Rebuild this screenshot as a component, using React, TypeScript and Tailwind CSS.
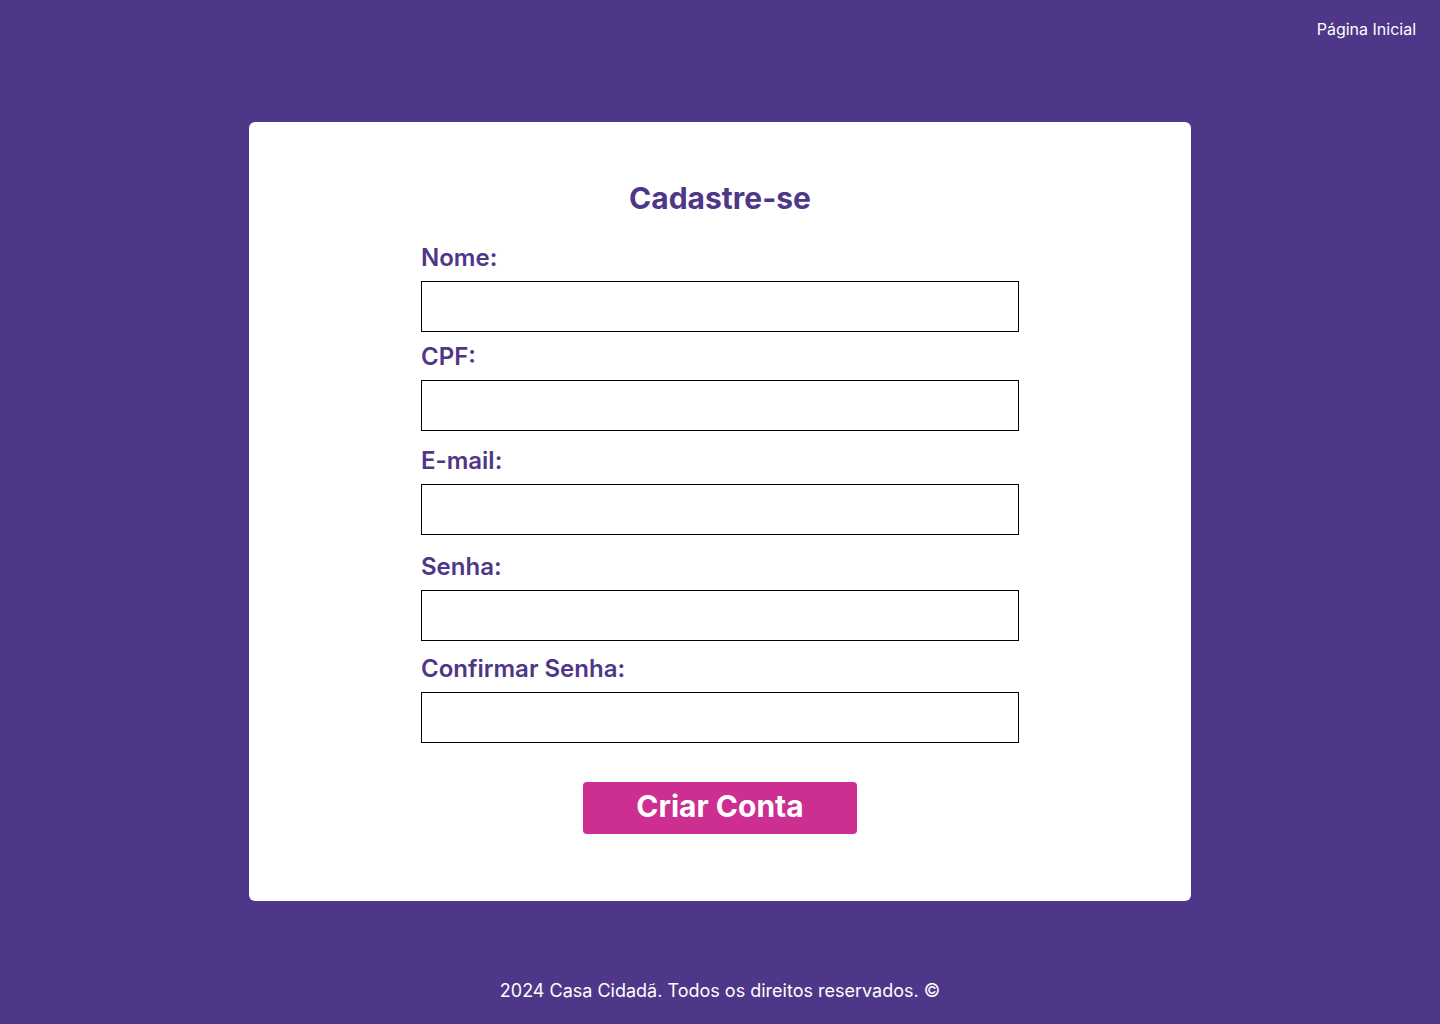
import { useState } from "react";

type Field = {
  name: string;
  label: string;
  type: string;
  labelClass: string;
};

const fields: Field[] = [
  { name: "nome", label: "Nome:", type: "text", labelClass: "mt-0" },
  { name: "cpf", label: "CPF:", type: "text", labelClass: "mt-[9px]" },
  { name: "email", label: "E-mail:", type: "email", labelClass: "mt-[14px]" },
  { name: "senha", label: "Senha:", type: "password", labelClass: "mt-4" },
  {
    name: "confirmarSenha",
    label: "Confirmar Senha:",
    type: "password",
    labelClass: "mt-3",
  },
];

const App = () => {
  const [values, setValues] = useState<Record<string, string>>({});

  return (
    <div className="flex min-h-screen flex-col bg-[#4e3688] font-['Inter',sans-serif]">
      <header className="flex h-[58px] items-center justify-end px-6">
        <a href="#" className="text-base text-white">
          Página Inicial
        </a>
      </header>

      <main className="mt-16 flex justify-center">
        <form
          onSubmit={(e) => e.preventDefault()}
          className="flex h-[779px] w-[942px] flex-col items-center rounded-md bg-white pt-[58px]"
        >
          <h2 className="text-3xl font-bold text-[#4e3688]">Cadastre-se</h2>
          <div className="mt-[26px] flex w-[598px] flex-col">
            {fields.map((f) => (
              <label
                key={f.name}
                htmlFor={f.name}
                className={`flex flex-col gap-[7px] text-2xl font-semibold text-[#4e3688] ${f.labelClass}`}
              >
                {f.label}
                <input
                  id={f.name}
                  type={f.type}
                  value={values[f.name] ?? ""}
                  onChange={(e) =>
                    setValues({ ...values, [f.name]: e.target.value })
                  }
                  className="h-[51px] w-full border border-black px-2 text-base font-normal text-black outline-none"
                />
              </label>
            ))}
          </div>
          <button
            type="submit"
            className="mt-[39px] h-[52px] w-[274px] rounded bg-[#cc2e91] pb-1 text-3xl font-bold text-white"
          >
            Criar Conta
          </button>
        </form>
      </main>

      <footer className="mt-auto flex h-[66px] items-center justify-center text-lg text-white">
        2024 Casa Cidadã. Todos os direitos reservados. ©
      </footer>
    </div>
  );
};

export default App;
